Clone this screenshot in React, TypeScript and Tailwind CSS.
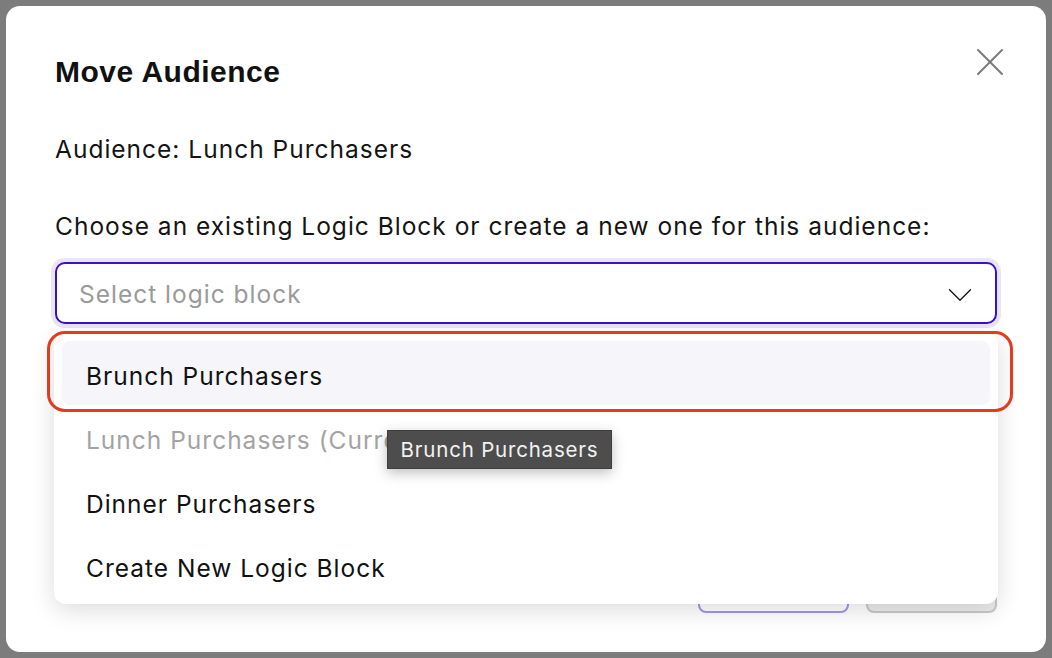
import { X, ChevronDown } from "lucide-react";

const options = [
  { label: "Brunch Purchasers", disabled: false },
  { label: "Lunch Purchasers (Current)", disabled: true },
  { label: "Dinner Purchasers", disabled: false },
  { label: "Create New Logic Block", disabled: false },
];

function App() {
  return (
    <div
      className="h-[658px] w-[1052px] overflow-hidden bg-[#7c7c7c] p-[6px]"
      style={{ fontFamily: "Inter, 'Noto Sans', sans-serif" }}
    >
      <div className="relative flex h-[646px] w-[1040px] flex-col rounded-[14px] bg-white px-[49px] pt-[44px] pb-[39px]">
        {/* Header */}
        <div className="flex h-[44px] items-center justify-between">
          <h2
            className="text-[30px] font-bold leading-[34px] tracking-[0.5px] text-[#111]"
            style={{ fontFamily: "'Liberation Sans', Arial, sans-serif" }}
          >
            Move Audience
          </h2>
          <button className="-mr-[17px] mb-[20px] text-[#7a7a7a]">
            <X size={48} strokeWidth={1} />
          </button>
        </div>

        <p className="mt-[40px] text-[24.5px] leading-[30px] tracking-[1px] text-[#141414]">
          Audience: Lunch Purchasers
        </p>

        <p className="mt-[47px] text-[24.5px] leading-[30px] tracking-[1px] text-[#141414]">
          Choose an existing Logic Block or create a new one for this audience:
        </p>

        {/* Select */}
        <div className="relative mt-[21px]">
          <div className="flex h-[62px] items-center justify-between rounded-[10px] border-2 border-[#3a10c8] bg-white pl-[22px] pr-[14px] ring-4 ring-[#e9e4fb]">
            <span className="pt-[3px] text-[24.5px] tracking-[1px] text-[#9a9a9a]">Select logic block</span>
            <ChevronDown size={42} strokeWidth={0.75} className="mt-[3px] text-[#111]" />
          </div>

          {/* Dropdown */}
          <div className="absolute left-[-1px] right-[-1px] top-[70px] z-10 rounded-[12px] bg-white px-[8px] pt-[9px] pb-[7px] shadow-[0_6px_24px_rgba(0,0,0,0.14)]">
            {options.map((o, i) => (
              <div
                key={o.label}
                className={`flex h-[64px] items-center rounded-[8px] px-[24px] pt-[6px] text-[24.5px] tracking-[1px] ${
                  i === 0 ? "bg-[#f5f5fa]" : ""
                } ${o.disabled ? "text-[#a3a3a3]" : "text-[#111]"}`}
              >
                {o.label}
              </div>
            ))}

            {/* highlight outline */}
            <div className="pointer-events-none absolute left-[-7px] right-[-15px] top-[-1px] h-[81px] rounded-[18px] border-[3px] border-[#e23b1d]" />

            {/* tooltip */}
            <div className="absolute left-[333px] top-[98px] flex h-[39px] w-[225px] items-center justify-center border border-[#3e3e3e] bg-[#4d4d4d] pt-[2px] text-[20.5px] tracking-[0.8px] text-[#f2f2f2] shadow-[0_4px_12px_rgba(0,0,0,0.25)]">
              Brunch Purchasers
            </div>
          </div>
        </div>

        {/* Footer buttons (behind dropdown) */}
        <div className="mt-auto flex justify-end gap-[17px]">
          <button className="h-[48px] w-[151px] rounded-[8px] border-2 border-[#a993ee] bg-white" />
          <button className="h-[48px] w-[131px] rounded-[8px] border-2 border-[#c8c8c8] bg-[#ececec]" />
        </div>
      </div>
    </div>
  );
}

export default App;
